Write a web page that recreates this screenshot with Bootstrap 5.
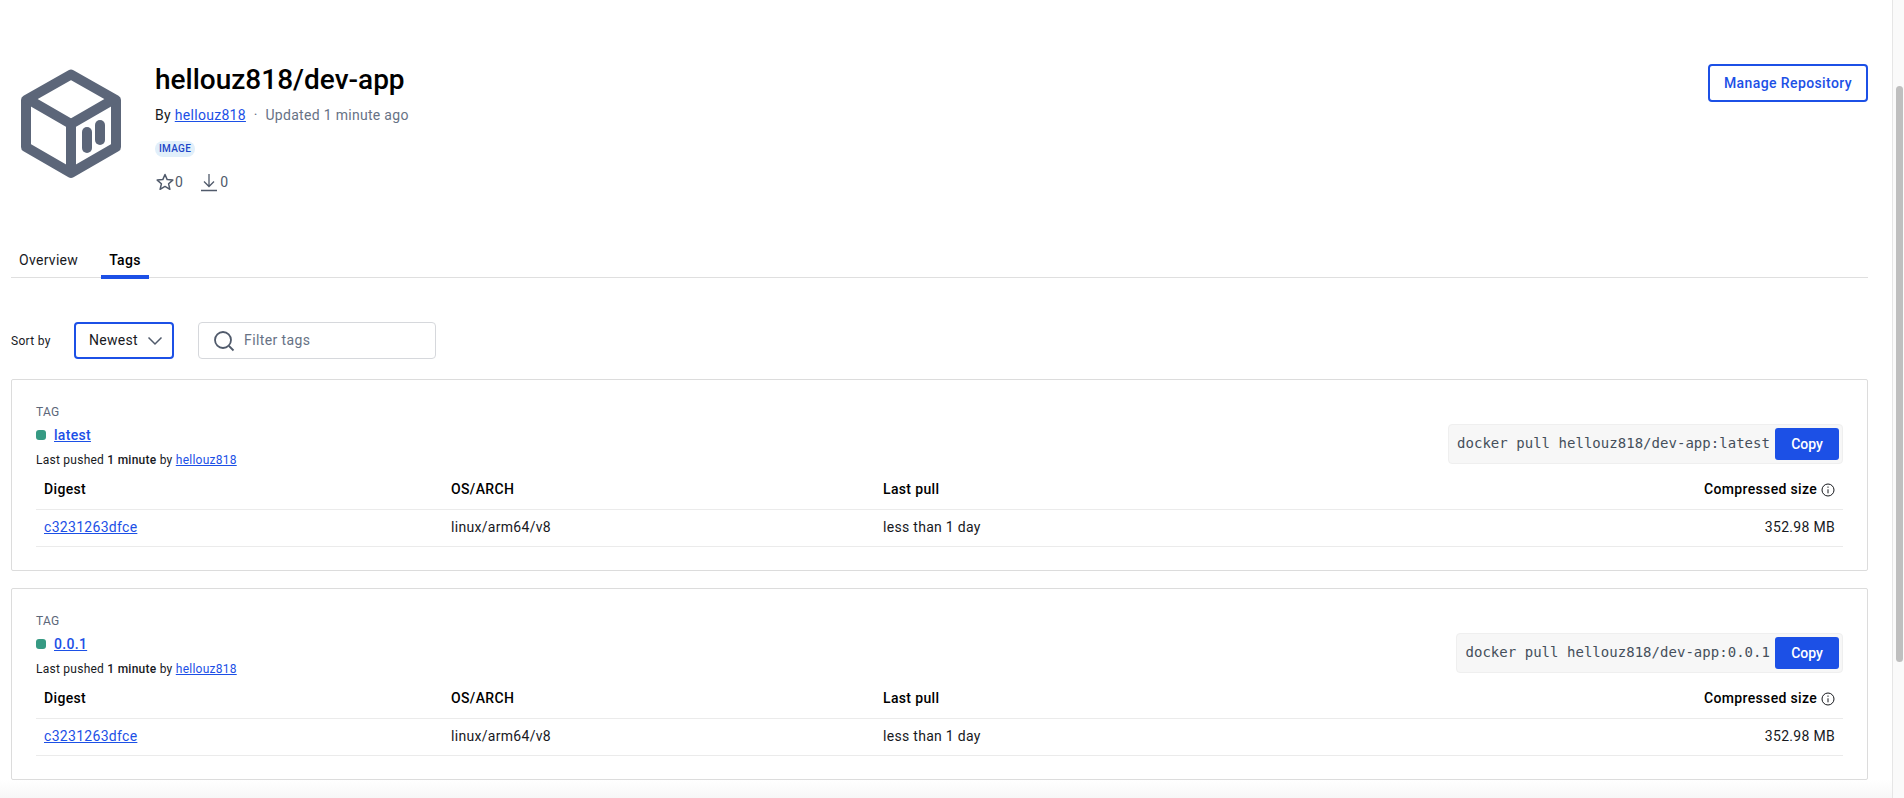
<!DOCTYPE html>
<html lang="en">

<head>
    <meta charset="UTF-8">
    <meta name="viewport" content="width=device-width, initial-scale=1.0">
    <title>hellouz818/dev-app</title>
    <link href="https://cdn.jsdelivr.net/npm/bootstrap@5.3.0/dist/css/bootstrap.min.css" rel="stylesheet">
    <style>
        html, body { height: 100%; overflow: hidden; }
        body { font-family: Roboto, "Liberation Sans", sans-serif; font-size: 14px; color: #17191e; letter-spacing: .3px; }
        a { color: #1c50e6; }
        .page-main { padding: 64px 24px 0 11px; min-width: 0; }
        .repo-head { height: 187px; }
        .repo-logo { width: 100px; height: 110px; margin: 5px 34px 0 10px; }
        .repo-info { margin-top: 1px; }
        .repo-title { font-size: 28px; font-weight: 500; line-height: 30px; color: #000; letter-spacing: 0; margin: 0 0 10px; }
        .muted-text { color: #677285; }
        .image-tag { background: #e1effa; color: #1c46c8; font-size: 10px; font-weight: 500; line-height: 16px; height: 16px; width: 40px; border-radius: 8px; margin: 15px 0 15px; }
        .count-line { color: #505a6b; font-size: 14px; line-height: 20px; }
        .star-count { margin-right: 17px; }
        .pull-count { margin-left: 2px; }
        .btn-manage { border: 2px solid #1c50e6; color: #1c50e6; background: #fff; font-size: 14px; font-weight: 500; height: 38px; width: 160px; border-radius: 4px; padding: 0; letter-spacing: .4px; }
        .tabs-row { border-bottom: 1px solid #dfdfdf; height: 27px; }
        .tab-item { padding: 0 8px; margin-bottom: -1px; color: #17191e; line-height: 18px; height: 28px; text-decoration: none; }
        .tab-one { margin-right: 15px; }
        .tab-on { font-weight: 500; border-bottom: 4px solid #1c50e6; color: #000; }
        .sort-row { margin-top: 44px; height: 37px; }
        .sort-label { font-size: 12px; width: 63px; }
        .sort-pick { width: 100px; height: 37px; border: 2px solid #1c50e6; border-radius: 4px; padding: 0 9px 0 13px; font-size: 14px; margin-right: 24px; }
        .tag-filter { width: 238px; height: 37px; border: 1px solid #d6d8dc; border-radius: 4px; padding-left: 14px; }
        .tag-filter .form-control { font-size: 14px; padding: 0 0 0 9px; box-shadow: none; letter-spacing: .4px; }
        .tag-filter .form-control::placeholder { color: #677285; }
        .tag-card { border: 1px solid #dcdcdc; border-radius: 2px; padding: 23px 24px 24px; height: 192px; margin-top: 20px; }
        .tag-card + .tag-card { margin-top: 17px; }
        .tag-caption { font-size: 12px; line-height: 18px; color: #5c6779; }
        .tag-name { line-height: 20px; margin-top: 4px; font-weight: 500; }
        .status-dot { width: 10px; height: 10px; background: #369a83; border-radius: 3px; margin-right: 8px; }
        .push-line { font-size: 12px; line-height: 18px; margin-top: 6px; letter-spacing: .25px; }
        .pull-box { background: #f7f7f7; border: 1px solid #efefef; border-radius: 4px; height: 40px; padding: 3px 3px 3px 8px; margin-bottom: 5px; gap: 5px; }
        .pull-text { font-family: "DejaVu Sans Mono", "Liberation Mono", monospace; font-size: 14px; letter-spacing: .03px; color: #454f5b; margin-top: -2px; }
        .btn-copy { background: #1c50e6; color: #fff; font-size: 14px; font-weight: 500; width: 64px; height: 32px; padding: 0; border: 0; border-radius: 3px; }
        .digest-table { margin: 0; table-layout: fixed; --bs-table-border-color: #ebebeb; --bs-table-color: #17191e; }
        .digest-table th { font-weight: 500; height: 40px; padding: 0 8px; line-height: 38px; vertical-align: middle; color: #000; letter-spacing: .35px; }
        .digest-table td { height: 37px; padding: 0 8px; vertical-align: middle; }
        .digest-table .col-digest { width: 407px; }
        .digest-table .col-os { width: 432px; }
        .page-fade { height: 20px; margin: 0 -24px 0 -11px; background: linear-gradient(#fff, #f6f6f6); }
        .scroll-track { width: 12px; flex: 0 0 12px; background: #fafafa; border-left: 1px solid #e6e6e6; padding: 86px 1px 0 3px; }
        .scroll-thumb { height: 576px; background: #bfbfbf; border-radius: 4px; }
    </style>
</head>

<body class="bg-white">
    <div class="d-flex h-100">
        <main class="page-main flex-grow-1">
            <div class="repo-head d-flex justify-content-between align-items-start">
                <div class="d-flex align-items-start">
                    <svg class="repo-logo" viewBox="21 69 100 110" fill="none" stroke="#5c6679" stroke-width="10" stroke-linejoin="round">
                        <path d="M71 74.5 116 100V147L71 173 26 147V100Z" />
                        <path d="M26 98 71 124 116 98M71 124V173" />
                        <rect x="82" y="127" width="10" height="26" rx="5" fill="#5c6679" stroke="none" />
                        <rect x="95" y="120" width="10" height="25" rx="5" fill="#5c6679" stroke="none" />
                    </svg>
                    <div class="repo-info">
                        <h1 class="repo-title">hellouz818/dev-app</h1>
                        <div>By <a href="#">hellouz818</a> <span class="muted-text mx-1">·</span> <span class="muted-text">Updated 1 minute ago</span></div>
                        <div class="image-tag d-flex align-items-center justify-content-center">IMAGE</div>
                        <div class="count-line d-flex align-items-center">
                            <svg width="20" height="20" viewBox="0 0 20 20" fill="none" stroke="#505a6b" stroke-width="1.5" stroke-linejoin="round"><path d="M10 2.5 12.2 7.6 17.8 8.1 13.6 11.8 14.9 17.3 10 14.4 5.1 17.3 6.4 11.8 2.2 8.1 7.8 7.6Z" /></svg>
                            <span class="star-count">0</span>
                            <svg width="18" height="20" viewBox="0 0 18 20" fill="none" stroke="#505a6b" stroke-width="1.3"><path d="M9 2V14M4 9.5 9 14.5 14 9.5M1 18.5H17" /></svg>
                            <span class="pull-count">0</span>
                        </div>
                    </div>
                </div>
                <button type="button" class="btn btn-manage">Manage Repository</button>
            </div>

            <div class="tabs-row d-flex">
                <a class="tab-item tab-one" href="#">Overview</a>
                <a class="tab-item tab-on" href="#">Tags</a>
            </div>

            <div class="sort-row d-flex align-items-center">
                <label class="sort-label">Sort by</label>
                <div class="sort-pick d-flex align-items-center justify-content-between">
                    <span>Newest</span>
                    <svg width="16" height="10" viewBox="0 0 16 10" fill="none" stroke="#505a6b" stroke-width="1.5"><path d="M1.5 1.5 8 8 14.500 1.500" /></svg>
                </div>
                <div class="tag-filter d-flex align-items-center">
                    <svg width="22" height="22" viewBox="0 0 22 22" fill="none" stroke="#505a6b" stroke-width="1.8" class="flex-shrink-0"><circle cx="10" cy="10" r="8" /><path d="M16 16 20.500 20.500" /></svg>
                    <input type="text" class="form-control border-0 bg-transparent" placeholder="Filter tags">
                </div>
            </div>

            <div class="card tag-card">
                <div class="d-flex justify-content-between align-items-end">
                    <div>
                        <div class="tag-caption">TAG</div>
                        <div class="tag-name d-flex align-items-center"><span class="status-dot"></span><a href="#">latest</a></div>
                        <div class="push-line">Last pushed <strong class="fw-medium">1 minute</strong> by <a href="#">hellouz818</a></div>
                    </div>
                    <div class="pull-box d-flex align-items-center">
                        <span class="pull-text">docker pull hellouz818/dev-app:latest</span>
                        <button type="button" class="btn btn-copy">Copy</button>
                    </div>
                </div>
                <table class="table digest-table">
                    <thead>
                        <tr>
                            <th class="col-digest">Digest</th>
                            <th class="col-os">OS/ARCH</th>
                            <th>Last pull</th>
                            <th class="text-end">Compressed size
                                <svg width="14" height="14" viewBox="0 0 14 14" fill="none" stroke="#17191e"><circle cx="7" cy="7" r="6" /><path d="M7 6.300V10.300M7 3.500V4.800" /></svg>
                            </th>
                        </tr>
                    </thead>
                    <tbody>
                        <tr>
                            <td><a href="#">c3231263dfce</a></td>
                            <td>linux/arm64/v8</td>
                            <td>less than 1 day</td>
                            <td class="text-end">352.98 MB</td>
                        </tr>
                    </tbody>
                </table>
            </div>

            <div class="card tag-card">
                <div class="d-flex justify-content-between align-items-end">
                    <div>
                        <div class="tag-caption">TAG</div>
                        <div class="tag-name d-flex align-items-center"><span class="status-dot"></span><a href="#">0.0.1</a></div>
                        <div class="push-line">Last pushed <strong class="fw-medium">1 minute</strong> by <a href="#">hellouz818</a></div>
                    </div>
                    <div class="pull-box d-flex align-items-center">
                        <span class="pull-text">docker pull hellouz818/dev-app:0.0.1</span>
                        <button type="button" class="btn btn-copy">Copy</button>
                    </div>
                </div>
                <table class="table digest-table">
                    <thead>
                        <tr>
                            <th class="col-digest">Digest</th>
                            <th class="col-os">OS/ARCH</th>
                            <th>Last pull</th>
                            <th class="text-end">Compressed size
                                <svg width="14" height="14" viewBox="0 0 14 14" fill="none" stroke="#17191e"><circle cx="7" cy="7" r="6" /><path d="M7 6.300V10.300M7 3.500V4.800" /></svg>
                            </th>
                        </tr>
                    </thead>
                    <tbody>
                        <tr>
                            <td><a href="#">c3231263dfce</a></td>
                            <td>linux/arm64/v8</td>
                            <td>less than 1 day</td>
                            <td class="text-end">352.98 MB</td>
                        </tr>
                    </tbody>
                </table>
            </div>
            <div class="page-fade"></div>
        </main>
        <div class="scroll-track">
            <div class="scroll-thumb"></div>
        </div>
    </div>

    <script src="https://cdn.jsdelivr.net/npm/bootstrap@5.3.0/dist/js/bootstrap.bundle.min.js"></script>
</body>

</html>
